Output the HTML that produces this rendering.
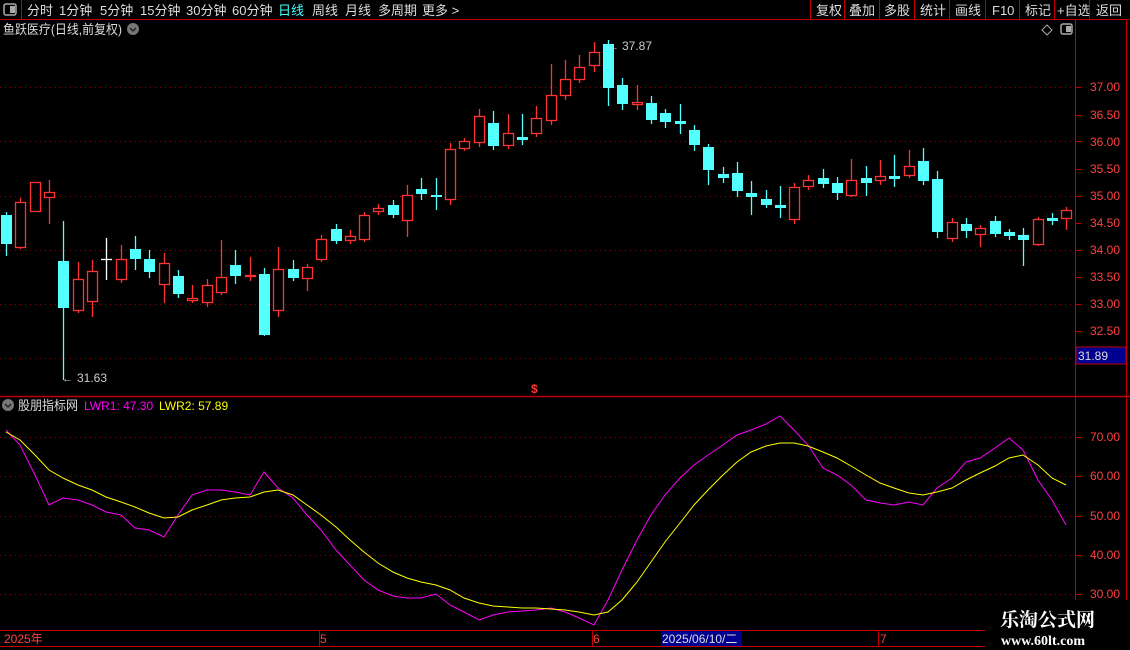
<!DOCTYPE html>
<html><head><meta charset="utf-8"><style>
body{margin:0;background:#000;width:1130px;height:650px;overflow:hidden;font-family:"Liberation Sans","Noto Sans CJK SC",sans-serif;}
svg{position:absolute;left:0;top:0}
</style></head><body>
<svg id="s" width="1130" height="650" xmlns="http://www.w3.org/2000/svg" font-family="Liberation Sans, Noto Sans CJK SC, sans-serif">
<rect width="1130" height="650" fill="#000"/>
<line x1="0" y1="19.5" x2="1130" y2="19.5" stroke="#c00000"/>
<line x1="21.5" y1="0" x2="21.5" y2="20" stroke="#c00000"/>
<rect x="4" y="4" width="12" height="11" rx="2" fill="none" stroke="#aaa" stroke-width="1.5"/><rect x="10" y="6" width="5" height="7" fill="#aaa"/>
<g font-size="13" fill="#ddd">
<text x="27" y="15">分时</text><text x="59" y="15">1分钟</text><text x="100" y="15">5分钟</text><text x="140" y="15">15分钟</text><text x="186" y="15">30分钟</text><text x="232" y="15">60分钟</text>
<text x="278" y="15" fill="#4ff">日线</text><text x="312" y="15">周线</text><text x="345" y="15">月线</text><text x="378" y="15">多周期</text><text x="422" y="15">更多 &gt;</text>
<text x="816" y="15">复权</text><text x="849" y="15">叠加</text><text x="884" y="15">多股</text><text x="920" y="15">统计</text><text x="955" y="15">画线</text><text x="992" y="15">F10</text><text x="1025" y="15">标记</text><text x="1057" y="15">+自选</text><text x="1096" y="15">返回</text>
</g>
<g stroke="#c00000"><line x1="810.5" y1="0" x2="810.5" y2="20"/><line x1="844.5" y1="0" x2="844.5" y2="20"/><line x1="879.5" y1="0" x2="879.5" y2="20"/><line x1="914.5" y1="0" x2="914.5" y2="20"/><line x1="949.5" y1="0" x2="949.5" y2="20"/><line x1="985.5" y1="0" x2="985.5" y2="20"/><line x1="1019.5" y1="0" x2="1019.5" y2="20"/><line x1="1054.5" y1="0" x2="1054.5" y2="20"/><line x1="1089.5" y1="0" x2="1089.5" y2="20"/></g>
<text x="3" y="34" font-size="13" fill="#ddd" textLength="119" lengthAdjust="spacingAndGlyphs">鱼跃医疗(日线,前复权)</text>
<circle cx="133" cy="29" r="6" fill="#777"/><path d="M130 28l3 3 3-3" stroke="#222" stroke-width="1.5" fill="none"/>
<path d="M1047 25l5 5-5 5-5-5z" fill="none" stroke="#aaa"/>
<rect x="1061" y="24" width="11" height="10" rx="2" fill="none" stroke="#aaa" stroke-width="1.5"/><rect x="1066" y="26" width="5" height="6" fill="#aaa"/>
<line x1="1075.5" y1="20" x2="1075.5" y2="630" stroke="#c00000"/>
<line x1="1126.5" y1="20" x2="1126.5" y2="630" stroke="#c00000"/>
<line x1="0" y1="396.5" x2="1130" y2="396.5" stroke="#c00000" stroke-width="1.5"/>
<line x1="0" y1="630.5" x2="1130" y2="630.5" stroke="#c00000"/>
<line x1="0" y1="646.5" x2="1130" y2="646.5" stroke="#c00000"/>
<g id="grid" stroke="#a00000" stroke-dasharray="1,4"></g>
<g font-size="12" fill="#ff4040">
<text x="1090" y="91">37.00</text><text x="1090" y="119">36.50</text><text x="1090" y="146">36.00</text><text x="1090" y="173">35.50</text><text x="1090" y="200">35.00</text><text x="1090" y="227">34.50</text><text x="1090" y="254">34.00</text><text x="1090" y="281">33.50</text><text x="1090" y="308">33.00</text><text x="1090" y="335">32.50</text>
<text x="1090" y="441">70.00</text><text x="1090" y="480">60.00</text><text x="1090" y="520">50.00</text><text x="1090" y="559">40.00</text><text x="1090" y="598">30.00</text>
</g>
<rect x="1076" y="347" width="50" height="17" fill="#000090" stroke="#c00000"/>
<text x="1078" y="360" font-size="12" fill="#ddd">31.89</text>
<g id="c"></g>
<text x="608" y="50" font-size="11" fill="#ccc">←</text><text x="622" y="50" font-size="12" fill="#ccc">37.87</text>
<text x="62" y="382" font-size="11" fill="#ccc">←</text><text x="77" y="382" font-size="12" fill="#ccc">31.63</text>
<text x="531" y="393" font-size="12" fill="#f33" font-weight="bold">$</text>
<circle cx="8" cy="405" r="6" fill="#777"/><path d="M5 404l3 3 3-3" stroke="#222" stroke-width="1.5" fill="none"/>
<text x="18" y="410" font-size="13" fill="#ddd" textLength="60" lengthAdjust="spacingAndGlyphs">股朋指标网</text>
<text x="84" y="410" font-size="12" fill="#f0f">LWR1: 47.30</text>
<text x="159" y="410" font-size="12" fill="#ff0">LWR2: 57.89</text>
<polyline id="m" fill="none" stroke="#f0f" stroke-width="1"/>
<polyline id="y" fill="none" stroke="#ff0" stroke-width="1"/>
<g font-size="12" fill="#ff4040"><text x="4" y="643">2025年</text><text x="320" y="643">5</text><text x="593" y="643">6</text><text x="880" y="643">7</text></g>
<g stroke="#c00000"><line x1="319.5" y1="631" x2="319.5" y2="646"/><line x1="592.5" y1="631" x2="592.5" y2="646"/><line x1="878.5" y1="631" x2="878.5" y2="646"/></g>
<rect x="661" y="631" width="81" height="15" fill="#000090"/>
<text x="662" y="643" font-size="12" fill="#ddd">2025/06/10/二</text>
<rect x="985" y="600" width="145" height="50" fill="#000"/>
<text x="1000" y="626" font-size="19" font-weight="bold" fill="#fff" font-family="Liberation Serif, Noto Serif CJK SC, serif">乐淘公式网</text>
<text x="1001" y="645" font-size="14" font-weight="bold" fill="#fff" font-family="Liberation Serif, serif">www.60lt.com</text>
</svg>
<script>
var NS="http://www.w3.org/2000/svg";
function el(p,t,a){var e=document.createElementNS(NS,t);for(var k in a)e.setAttribute(k,a[k]);p.appendChild(e);return e;}
var g=document.getElementById('grid');
[87,141,196,250,304,358].forEach(function(y){el(g,'line',{x1:0,y1:y+.5,x2:1074,y2:y+.5});});
[437,476,516,555,594].forEach(function(y){el(g,'line',{x1:0,y1:y+.5,x2:1074,y2:y+.5});});
var tk=document.getElementById('s');
[87,115,141,169,196,223,250,277,304,331,437,476,516,555,594].forEach(function(y){el(tk,'line',{x1:1075,y1:y+.5,x2:1081,y2:y+.5,stroke:'#c00000'});});
var D=[[6,'c',215,244,212,256],[20,'r',202,247,198,249],[35,'r',182,211,182,211],[49,'r',192,197,180,224],[63,'c',261,308,221,380],[78,'r',279,310,262,313],[92,'r',271,301,260,317],[106,'w',259,259,238,280],[121,'r',259,279,245,283],[135,'c',249,259,236,270],[149,'c',259,272,250,278],[164,'r',263,284,253,303],[178,'c',276,294,270,298],[192,'r',298,300,285,303],[207,'r',285,302,279,307],[221,'r',277,292,240,295],[235,'c',265,276,250,284],[250,'r',275,276,257,281],[264,'c',274,335,268,336],[278,'r',269,310,247,317],[293,'c',269,278,260,281],[307,'r',267,278,264,291],[321,'r',239,259,235,262],[336,'c',229,241,224,244],[350,'r',236,240,230,244],[364,'r',215,239,212,242],[378,'r',208,211,204,215],[393,'c',205,215,200,218],[407,'r',195,220,185,237],[421,'c',189,194,178,200],[436,'c',195,197,178,210],[450,'r',149,199,143,205],[464,'r',141,148,138,151],[479,'r',116,142,109,147],[493,'c',123,146,111,150],[508,'r',133,145,114,149],[522,'c',137,140,114,145],[536,'r',118,133,106,137],[551,'r',95,120,64,125],[565,'r',79,95,60,100],[579,'r',67,79,55,83],[594,'r',52,65,42,72],[608,'c',44,88,40,106],[622,'c',85,104,78,110],[637,'r',102,104,85,110],[651,'c',103,120,96,124],[665,'c',113,122,109,128],[680,'c',121,124,104,134],[694,'c',130,145,125,151],[708,'c',147,170,144,185],[723,'c',174,178,167,183],[737,'c',173,191,162,197],[751,'c',193,197,181,215],[766,'c',199,205,190,208],[780,'c',205,208,186,218],[794,'r',187,219,183,224],[808,'r',180,186,175,190],[823,'c',178,184,169,188],[837,'c',183,193,177,200],[851,'r',180,195,159,197],[866,'c',178,183,166,196],[880,'r',176,180,160,185],[894,'c',176,179,155,187],[909,'r',166,175,150,178],[923,'c',161,181,148,185],[937,'c',179,232,171,238],[952,'r',222,238,218,242],[966,'c',224,231,218,238],[980,'r',228,234,225,247],[995,'c',221,234,216,237],[1009,'c',232,236,229,240],[1023,'c',235,240,228,266],[1038,'r',219,244,217,246],[1052,'c',218,221,213,225],[1066,'r',210,218,207,230]];
var cg=document.getElementById('c');
D.forEach(function(d){var x=d[0],col=d[1]=='c'?'#54ffff':d[1]=='r'?'#ff3232':'#fff';
el(cg,'line',{x1:x+.5,y1:d[4],x2:x+.5,y2:d[5],stroke:col,'stroke-width':1.3});
if(d[1]=='c')el(cg,'rect',{x:x-5,y:d[2],width:11,height:Math.max(1,d[3]-d[2]),fill:col});
else if(d[1]=='r'){el(cg,'rect',{x:x-4.5,y:d[2]+.5,width:10,height:Math.max(1,d[3]-d[2]),fill:'#000',stroke:col,'stroke-width':1.3});}
else el(cg,'line',{x1:x-5,y1:d[2]+.5,x2:x+6,y2:d[2]+.5,stroke:col,'stroke-width':1.3});});
var xs=D.map(function(d){return d[0];});
var M=[430,445,475,505,498,500,505,512,515,528,530,537,515,495,490,490,492,495,472,488,498,515,530,550,565,580,590,596,598,598,594,605,612,620,615,612,611,610,608,612,618,625,600,570,540,515,495,478,465,455,445,435,430,424,416,430,445,468,475,485,500,503,505,502,505,488,478,462,458,448,438,450,480,500,525];
var Y=[432,440,455,470,478,485,490,497,502,507,513,518,517,510,505,500,498,497,492,490,495,505,515,527,540,552,563,572,578,582,585,590,598,603,606,607,608,608,609,610,612,615,612,600,582,562,542,523,505,490,475,462,452,446,443,443,446,452,458,466,475,483,488,493,495,492,488,480,473,466,458,455,465,478,485];
document.getElementById('m').setAttribute('points',xs.map(function(x,i){return x+','+M[i];}).join(' '));
document.getElementById('y').setAttribute('points',xs.map(function(x,i){return x+','+Y[i];}).join(' '));
</script>
</body></html>
